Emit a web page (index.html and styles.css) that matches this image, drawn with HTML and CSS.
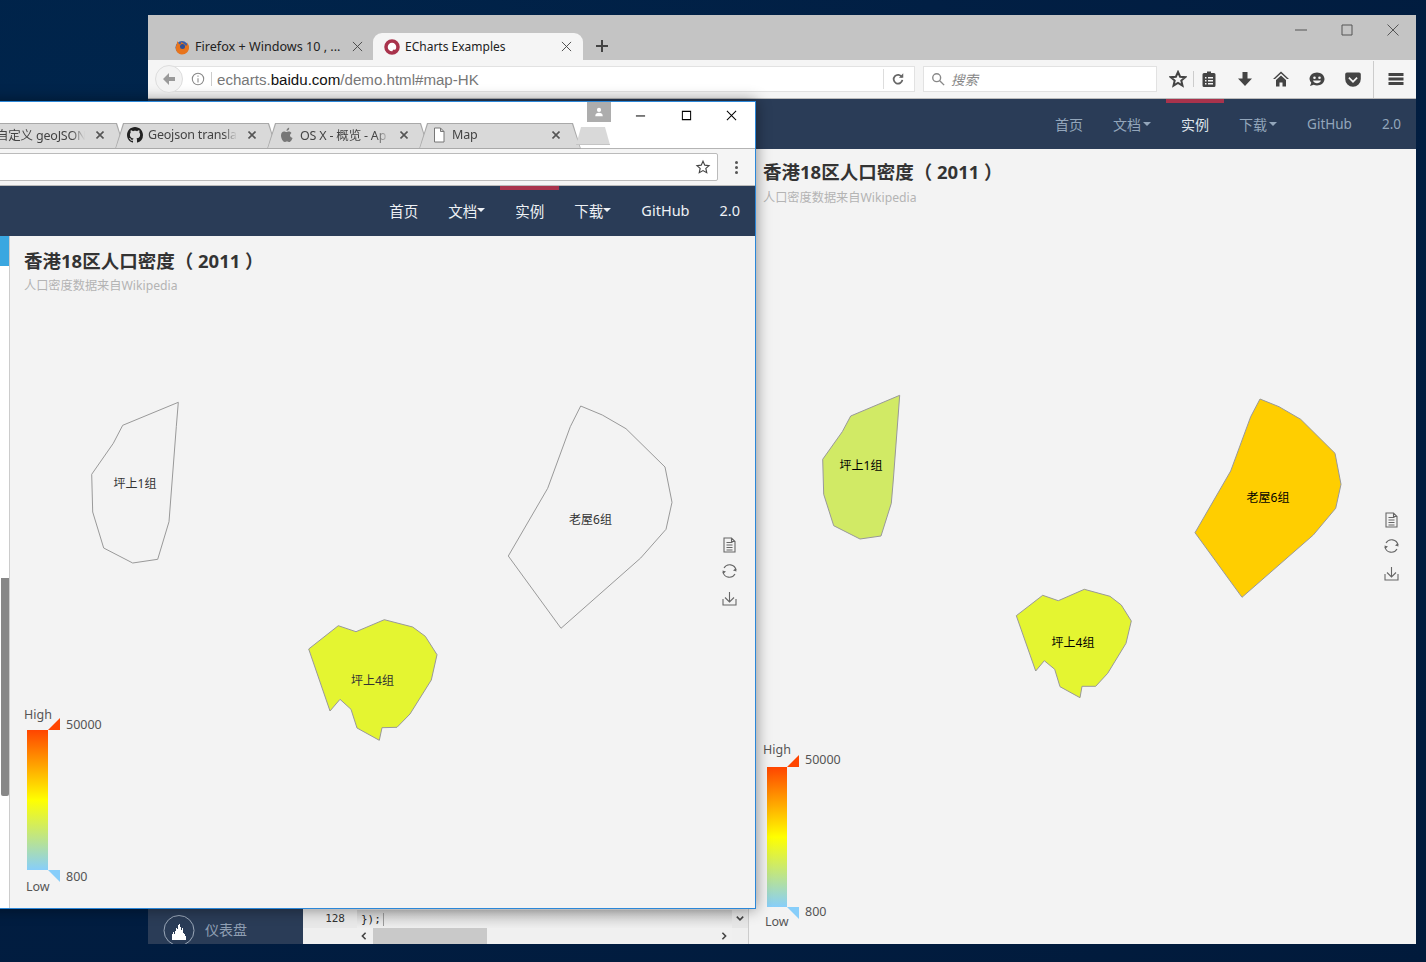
FILE: index.html
```html
<!DOCTYPE html>
<html lang="zh-CN">
<head>
    <meta charset="UTF-8">
    <title>ECharts Examples</title>
    <link rel="stylesheet" href="styles.css">
</head>
<body>
    <!-- back window: firefox -->
    <div class="ff-window">
        <div class="ff-tabbar">
            <div class="ff-tab">
                <svg class="ff-favicon" viewBox="0 0 16 16"><circle cx="8" cy="8.5" r="6.5" fill="#3c5fa8"/><path d="M3 2c0 2 0 3-1 5-1 4 1 8 6 8.500 4 0 7-3 7-7 0-2-1-4-2-5 .5 2 0 3-1 3.500-1-2-3-3-5-4 .5 1 0 2-1 2.500C5 5 4 3.500 3 2z" fill="#e8741c"/><circle cx="8.500" cy="7.500" r="2.500" fill="#2f4f95"/></svg>
                <span class="ff-tab-title">Firefox + Windows 10 , ...</span>
                <svg class="ff-close" viewBox="0 0 12 12"><path d="M1 1l10 10M11 1L1 11"/></svg>
            </div>
            <div class="ff-tab ff-tab-active">
                <svg class="ff-favicon" viewBox="0 0 16 16"><circle cx="8" cy="8" r="6" fill="#fff" stroke="#a9334c" stroke-width="3.500"/><circle cx="10" cy="12" r="1.500" fill="#a9334c"/></svg>
                <span class="ff-tab-title">ECharts Examples</span>
                <svg class="ff-close" viewBox="0 0 12 12"><path d="M1 1l10 10M11 1L1 11"/></svg>
            </div>
            <svg class="ff-plus" viewBox="0 0 14 14"><path d="M7 1v12M1 7h12"/></svg>
            <div class="ff-controls">
                <svg viewBox="0 0 12 12"><path d="M0 6h12"/></svg>
                <svg viewBox="0 0 12 12"><path d="M1 1h10v10H1z"/></svg>
                <svg viewBox="0 0 12 12"><path d="M0.500 0.500l11 11M11.500 0.500l-11 11"/></svg>
            </div>
        </div>

        <div class="ff-toolbar">
            <div class="ff-back">
                <svg viewBox="0 0 16 16"><path d="M8 2L2 8l6 6V10h6V6H8z"/></svg>
            </div>
            <div class="ff-urlbar">
                <svg class="ff-info" viewBox="0 0 16 16"><circle cx="8" cy="8" r="6.500"/><path d="M8 7v5M8 4v1.500"/></svg>
                <span class="ff-url"><span class="url-dim">echarts.</span>baidu.com<span class="url-dim">/demo.html#map-HK</span></span>
                <svg class="ff-reload" viewBox="0 0 16 16"><path d="M12.500 6A5 5 0 1 0 13 9"/><path class="solid" d="M9 6.500h5V1.500z"/></svg>
            </div>
            <div class="ff-search">
                <svg viewBox="0 0 16 16"><circle cx="6.500" cy="6.500" r="4.500"/><path d="M10 10l5 5"/></svg>
                <span>搜索</span>
            </div>
            <div class="ff-icons">
                <svg class="ic-star" viewBox="0 0 18 18"><path d="M9 2l2.100 4.700 5.100.5-3.900 3.400 1.200 5L9 13l-4.500 2.600 1.200-5-3.900-3.400 5.100-.5z"/></svg>
                <span class="ff-sep"></span>
                <svg viewBox="0 0 18 18"><path fill-rule="evenodd" d="M4 3h3V1.500h4V3h3a1.500 1.500 0 0 1 1.500 1.500v11A1.500 1.500 0 0 1 14 17H4a1.500 1.500 0 0 1-1.500-1.500v-11A1.500 1.500 0 0 1 4 3zm1 4v1.500h1.500V7zm3 0v1.500h5V7zm-3 3v1.500h1.500V10zm3 0v1.500h5V10zm-3 3v1.500h1.500V13zm3 0v1.500h5V13z"/></svg>
                <svg viewBox="0 0 18 18"><path d="M6.500 2h5v6.500H16L9 16 2 8.500h4.500z"/></svg>
                <svg viewBox="0 0 18 18"><path d="M9 1.500L1 9h2L9 3.500 15 9h2zM9 5.500L4 10v6.500h3.500v-4h3v4H14V10z"/></svg>
                <svg viewBox="0 0 18 18"><path fill-rule="evenodd" d="M9 2.500c4 0 7.500 2.800 7.500 6.500s-3.500 6.500-7.500 6.500c-1.200 0-2.300-.2-3.300-.7L2 16l1.300-3.200A6.300 6.300 0 0 1 1.500 9C1.500 5.300 5 2.500 9 2.500zM6.500 6.500a1.300 1.300 0 1 0 0 2.600 1.300 1.300 0 0 0 0-2.600zm5 0a1.300 1.300 0 1 0 0 2.600 1.300 1.300 0 0 0 0-2.600zM5 10.500c.6 1.800 2.200 2.800 4 2.800s3.400-1 4-2.800z"/></svg>
                <svg viewBox="0 0 18 18"><path fill-rule="evenodd" d="M3 2.500h12A1.800 1.800 0 0 1 16.800 4.300V9A7.800 7.800 0 0 1 1.200 9V4.300A1.800 1.800 0 0 1 3 2.500zM5.500 7L9 10.500 12.500 7l1.200 1.200L9 13 4.300 8.200z"/></svg>
                <span class="ff-sep ff-sep-wide"></span>
                <svg viewBox="0 0 18 18"><path d="M1.500 3h15v3h-15zM1.500 7.500h15v3h-15zM1.500 12h15v3h-15z"/></svg>
            </div>
        </div>

        <nav class="site-nav site-nav-dim">
            <a>首页</a>
            <a>文档<i class="caret"></i></a>
            <a class="active">实例</a>
            <a>下载<i class="caret"></i></a>
            <a>GitHub</a>
            <a>2.0</a>
        </nav>

        <div class="ff-main">
            <aside class="side-menu">
                <div class="side-item">
                    <svg class="side-icon" viewBox="0 0 32 32"><circle cx="16" cy="15.500" r="15"/><path class="solid" d="M9 25v-6h1v-2h1v2h1v-3h1v-3h1v1h1v-4h1v-1h1v3h1v3h1v-2h1v5h1v1h1v2h1v4z"/></svg>
                    <span class="side-label">仪表盘</span>
                </div>
            </aside>
            <div class="code-pane">
                <div class="code-row">
                    <span class="code-gutter">128</span>
                    <span class="code-line"><span class="code-text">});</span></span>
                    <span class="code-vbar"><svg viewBox="0 0 10 8"><path d="M1 1l4 4 4-4"/></svg></span>
                </div>
                <div class="code-hbar">
                    <svg viewBox="0 0 8 10"><path d="M6 1L2 5l4 4"/></svg>
                    <span class="code-thumb"></span>
                    <svg viewBox="0 0 8 10"><path d="M2 1l4 4-4 4"/></svg>
                </div>
            </div>
            <section class="chart-pane chart-pane-back">
                <h2>香港18区人口密度（ 2011 ）</h2>
                <p>人口密度数据来自Wikipedia</p>
                <svg class="chart" viewBox="749 149 667 795">
                    <defs>
                        <linearGradient id="ramp" x1="0" y1="0" x2="0" y2="1">
                            <stop offset="0" stop-color="#ff4500"/>
                            <stop offset="0.5" stop-color="#ffff00"/>
                            <stop offset="1" stop-color="#87cefa"/>
                        </linearGradient>
                        <g id="tools">
                            <path d="M-5.500-7h7.500l3.500 3.500V7h-11zM2-7v3.500h3.500M-3-2.500h6M-3 0h6M-3 2.500h6M-3 5h6"/>
                            <path d="M6.500 25a6.500 6.500 0 0 0-12-2M-6.500 27a6.500 6.500 0 0 0 12 2"/>
                            <path class="tool-solid" d="M7 26.500l-3.500-1 3-2.500zM-7 25.500l3.500 1-3 2.500z"/>
                            <path d="M0 47v10M-4.500 52.500L0 57l4.500-4.500M-6.500 54v6h13v-6"/>
                        </g>
                    </defs>
                    <polygon class="area" fill="#d1ea65" points="899.700,395.300 893.300,480 891.300,503.300 881,536 860,539 833.700,525.700 823.700,494.300 822.700,459.300 842.300,431.700 850.700,416"/>
                    <polygon class="area" fill="#e4f531" points="1016.300,615.700 1042.700,595.300 1058.300,600.700 1084.300,589.300 1110,596.300 1121.300,605 1131.300,621 1126,643.300 1107.700,673.300 1095.700,686.300 1082,686.300 1080,697.700 1060,686.700 1054.700,669.300 1044.300,660.700 1035.700,671"/>
                    <polygon class="area" fill="#ffce00" points="1260,399 1279,406.700 1300.700,419.300 1335,453.300 1341,484.300 1335.700,508.300 1313.300,535 1242,597.300 1195,532.700 1230.700,471 1250.700,416.700"/>
                    <text class="area-label" x="861" y="470">坪上1组</text>
                    <text class="area-label" x="1073" y="647">坪上4组</text>
                    <text class="area-label" x="1268" y="502">老屋6组</text>
                    <use class="tool" href="#tools" x="1391.500" y="520"/>
                    <rect x="767" y="767" width="20" height="140" fill="url(#ramp)"/>
                    <polygon points="787,767 799,767 799,755" fill="#ff4500"/>
                    <polygon points="787,907 799,907 799,919" fill="#87cefa"/>
                    <text class="legend-text" x="763" y="754">High</text>
                    <text class="legend-text" x="765" y="926">Low</text>
                    <text class="legend-text" x="805" y="764">50000</text>
                    <text class="legend-text" x="805" y="916">800</text>
                </svg>
            </section>
        </div>
    </div>

    <!-- front window: chrome -->
    <div class="cr-window">
        <div class="cr-titlebar">
            <div class="cr-tabs">
                <div class="cr-tab">
                    <span class="cr-tab-icon"></span>
                    <span class="cr-tab-title">自定义 geoJSON</span>
                    <svg class="cr-close" viewBox="0 0 8 8"><path d="M0.500 0.500l7 7M7.500 0.500l-7 7"/></svg>
                </div>
                <div class="cr-tab">
                    <svg class="cr-tab-icon" viewBox="0 0 16 16"><path d="M8 0C3.580 0 0 3.580 0 8c0 3.540 2.290 6.530 5.470 7.590.4.070.550-.170.550-.380 0-.190-.010-.820-.010-1.490-2.010.370-2.530-.490-2.690-.940-.090-.230-.480-.940-.820-1.130-.280-.150-.680-.520-.010-.530.630-.010 1.080.580 1.230.820.720 1.210 1.870.870 2.330.660.070-.520.280-.870.510-1.070-1.780-.2-3.640-.890-3.640-3.950 0-.870.310-1.590.820-2.150-.080-.2-.360-1.020.080-2.120 0 0 .670-.210 2.200.820.640-.180 1.320-.270 2-.270.680 0 1.360.090 2 .270 1.530-1.040 2.200-.820 2.200-.820.440 1.100.160 1.920.080 2.120.510.560.820 1.270.820 2.150 0 3.070-1.870 3.750-3.650 3.950.290.250.540.730.540 1.480 0 1.070-.010 1.930-.010 2.200 0 .210.150.460.550.380A8.013 8.013 0 0 0 16 8c0-4.420-3.580-8-8-8z"/></svg>
                    <span class="cr-tab-title">Geojson transla</span>
                    <svg class="cr-close" viewBox="0 0 8 8"><path d="M0.500 0.500l7 7M7.500 0.500l-7 7"/></svg>
                </div>
                <div class="cr-tab">
                    <svg class="cr-tab-icon cr-apple" viewBox="0 0 16 16"><path d="M11 8.500c0-1.700 1.400-2.500 1.500-2.600-.8-1.200-2.100-1.400-2.500-1.400-1.100-.1-2.100.6-2.600.6s-1.400-.6-2.300-.6C3.400 4.500 2 5.900 2 8.500c0 3 2.200 6.500 3.700 6.500.8 0 1.200-.6 2.300-.6s1.400.6 2.300.6c1.500 0 3-3 3.200-4.100-1.300-.6-2.500-1.200-2.500-2.400zM9.500 3c.5-.6.800-1.300.7-2.300-.7 0-1.500.5-2 1-.4.500-.8 1.300-.7 2.100.8.100 1.500-.3 2-.8z"/></svg>
                    <span class="cr-tab-title">OS X - 概览 - Ap</span>
                    <svg class="cr-close" viewBox="0 0 8 8"><path d="M0.500 0.500l7 7M7.500 0.500l-7 7"/></svg>
                </div>
                <div class="cr-tab">
                    <svg class="cr-tab-icon cr-doc" viewBox="0 0 16 16"><path d="M3.500 1h6l3.500 3.500v10.500H3.500zM9.500 1v3.500H13"/></svg>
                    <span class="cr-tab-title">Map</span>
                    <svg class="cr-close" viewBox="0 0 8 8"><path d="M0.500 0.500l7 7M7.500 0.500l-7 7"/></svg>
                </div>
                <span class="cr-newtab"></span>
            </div>
            <div class="cr-right">
                <span class="cr-user">
                    <svg viewBox="0 0 12 12"><circle cx="6" cy="3.500" r="2.500"/><path d="M1.500 11c0-3 2-4 4.500-4s4.500 1 4.500 4z"/></svg>
                </span>
                <span class="cr-btn"><svg viewBox="0 0 12 12"><path d="M1 6.500h10"/></svg></span>
                <span class="cr-btn"><svg viewBox="0 0 12 12"><path d="M1.500 1.500h9v9h-9z"/></svg></span>
                <span class="cr-btn"><svg viewBox="0 0 12 12"><path d="M1 1l10 10M11 1L1 11"/></svg></span>
            </div>
        </div>
        <div class="cr-toolbar">
            <div class="cr-urlbar">
                <svg viewBox="0 0 18 18"><path d="M9 2.500l2 4.400 4.800.5-3.600 3.200 1 4.800L9 13l-4.200 2.400 1-4.800-3.600-3.200 4.800-.5z"/></svg>
            </div>
            <span class="cr-menu"><i></i><i></i><i></i></span>
        </div>
        <nav class="site-nav site-nav-front">
            <a>首页</a>
            <a>文档<i class="caret"></i></a>
            <a class="active">实例</a>
            <a>下载<i class="caret"></i></a>
            <a>GitHub</a>
            <a>2.0</a>
        </nav>
        <div class="cr-main">
            <aside class="cr-side">
                <span class="cr-side-active"></span>
                <span class="cr-scroll"></span>
            </aside>
            <section class="chart-pane">
                <h2>香港18区人口密度（ 2011 ）</h2>
                <p>人口密度数据来自Wikipedia</p>
                <svg class="chart" viewBox="10 236 745 672">
                    <polygon class="area" fill="none" points="178.300,402.300 176.300,426.700 169,521.700 157.700,559.300 132.700,563 103.700,548 92.700,512 91.700,474.300 113.300,443.300 122.700,425.300"/>
                    <polygon class="area" fill="#e4f531" points="308.700,649 338.300,625.700 356,631.700 384.300,619.700 412.700,627 425.300,636.300 437,654.700 431.300,680 410,714 397,727.300 382,727.700 379.300,740.300 357,728 351,709.300 340,699.300 330,711"/>
                    <polygon class="area" fill="none" points="580.700,406 602.300,415 626,428.700 665,467 672,502.300 666,529.300 640.700,558 561,628.300 508.300,556 547.700,488.300 570.300,426.700"/>
                    <text class="area-label area-label-soft" x="135" y="488">坪上1组</text>
                    <text class="area-label area-label-soft" x="372.500" y="685">坪上4组</text>
                    <text class="area-label area-label-soft" x="590.500" y="524">老屋6组</text>
                    <use class="tool" href="#tools" x="729.500" y="545"/>
                    <rect x="27" y="730" width="21" height="140" fill="url(#ramp)"/>
                    <polygon points="48,730 60,730 60,718" fill="#ff4500"/>
                    <polygon points="48,870 60,870 60,882" fill="#87cefa"/>
                    <text class="legend-text" x="24" y="719">High</text>
                    <text class="legend-text" x="26" y="891">Low</text>
                    <text class="legend-text" x="66" y="729">50000</text>
                    <text class="legend-text" x="66" y="881">800</text>
                </svg>
            </section>
        </div>
    </div>
</body>
</html>
```

FILE: styles.css
```css
html, body {
    margin: 0;
    height: 100%;
}

body {
    position: relative;
    overflow: hidden;
    font-family: "Noto Sans", "Noto Sans CJK SC", sans-serif;
    background: radial-gradient(ellipse at 8% 12%, #00254c 0%, #011f44 45%, #011a3b 100%);
}

svg {
    display: block;
}

/* back window */
.ff-window {
    position: absolute;
    left: 148px;
    top: 15px;
    width: 1268px;
    height: 929px;
    display: flex;
    flex-direction: column;
}

.ff-tabbar {
    height: 45px;
    background: #c4c4c4;
    display: flex;
    align-items: flex-end;
    padding-left: 12px;
    flex: none;
}

.ff-tab {
    width: 213px;
    height: 27px;
    display: flex;
    align-items: center;
    padding: 0 6px 0 14px;
    box-sizing: border-box;
    font-size: 12.600px;
    color: #222;
}

.ff-tab-active {
    width: 210px;
    background: #f5f5f5;
    border-radius: 9px 9px 0 0;
    padding-left: 11px;
    padding-right: 7px;
    font-size: 12px;
}

.ff-favicon {
    width: 16px;
    height: 16px;
    flex: none;
    margin-right: 5px;
}

.ff-tab-title {
    flex: 1;
    white-space: nowrap;
}

.ff-close {
    width: 11px;
    height: 11px;
    flex: none;
    margin-right: 4px;
}

.ff-close path {
    fill: none;
    stroke: #444;
    stroke-width: 1;
}

.ff-plus {
    width: 14px;
    height: 14px;
    margin: 0 0 7px 12px;
}

.ff-plus path {
    fill: none;
    stroke: #444;
    stroke-width: 2;
}

.ff-controls {
    margin-left: auto;
    align-self: flex-start;
    display: flex;
    gap: 34px;
    padding: 9px 17px 0 0;
}

.ff-controls svg {
    width: 12px;
    height: 12px;
}

.ff-controls path {
    fill: none;
    stroke: #555;
    stroke-width: 1;
}

.ff-toolbar {
    height: 39px;
    flex: none;
    background: #f5f5f5;
    border-bottom: 1px solid #bbb;
    box-sizing: border-box;
    display: flex;
    align-items: center;
    position: relative;
    padding-left: 7px;
}

.ff-back {
    width: 28px;
    height: 28px;
    border: 1px solid #ddd;
    border-radius: 50%;
    background: #f3f3f3;
    box-sizing: border-box;
    display: flex;
    align-items: center;
    justify-content: center;
    flex: none;
    z-index: 1;
}

.ff-back svg {
    width: 16px;
    height: 16px;
    fill: #9a9a9a;
}

.ff-urlbar {
    width: 746px;
    height: 26px;
    margin-left: -14px;
    padding-left: 21px;
    background: #fff;
    border: 1px solid #e2e2e2;
    box-sizing: border-box;
    display: flex;
    align-items: center;
    flex: none;
}

.ff-info {
    width: 14px;
    height: 14px;
    fill: none;
    stroke: #888;
    stroke-width: 1.200;
    padding-right: 6px;
    border-right: 1px solid #ccc;
    flex: none;
}

.ff-url {
    font-family: "Liberation Sans", sans-serif;
    font-size: 15.100px;
    color: #111;
    margin-left: 5px;
    flex: 1;
    white-space: nowrap;
}

.url-dim {
    color: #777;
}

.ff-reload {
    width: 14px;
    height: 14px;
    padding: 3px 9px 3px 7px;
    border-left: 1px solid #ddd;
    fill: none;
    stroke: #666;
    stroke-width: 2;
    flex: none;
}

.ff-reload .solid {
    fill: #666;
    stroke: none;
}

.ff-search {
    width: 234px;
    height: 26px;
    margin-left: 8px;
    background: #fff;
    border: 1px solid #e2e2e2;
    box-sizing: border-box;
    display: flex;
    align-items: center;
    gap: 6px;
    padding-left: 7px;
    font-size: 13.500px;
    font-style: italic;
    color: #888;
    flex: none;
}

.ff-search svg {
    width: 14px;
    height: 14px;
    fill: none;
    stroke: #888;
    stroke-width: 1.600;
}

.ff-icons {
    display: flex;
    align-items: center;
    margin-left: 12px;
    gap: 18px;
}

.ff-icons svg {
    width: 18px;
    height: 18px;
    fill: #444;
    flex: none;
}

.ff-icons .ic-star {
    fill: none;
    stroke: #444;
    stroke-width: 2;
}

.ff-sep {
    width: 1px;
    height: 16px;
    background: #ccc;
    margin: 0 -12px 0 -12px;
}

.ff-sep-wide {
    height: 37px;
    margin: 0 -5.500px 0 -7px;
}

/* site header, same in both windows */
.site-nav {
    height: 50px;
    flex: none;
    background: #2a3c57;
    display: flex;
    justify-content: flex-end;
    align-items: center;
    font-size: 14.500px;
    color: #eef1f5;
}

.site-nav a {
    height: 100%;
    padding: 0 15px;
    display: flex;
    align-items: center;
    box-sizing: border-box;
    white-space: nowrap;
}

.site-nav .active {
    border-top: 4px solid #a9334c;
    padding-bottom: 4px;
}

.site-nav-front a {
    padding-bottom: 2px;
}

.site-nav-front .active {
    padding-bottom: 6px;
}

.site-nav-front .caret {
    margin-left: 0;
}

.site-nav-dim {
    font-size: 14px;
    color: #93a6bb;
}

.site-nav-dim a:nth-child(n+5) {
    font-size: 13.500px;
}

.site-nav-dim .active {
    color: #dfe5ec;
}

.caret {
    width: 0;
    height: 0;
    margin-left: 2px;
    border-left: 4px solid transparent;
    border-right: 4px solid transparent;
    border-top: 4px solid currentColor;
}

.ff-main {
    flex: 1;
    display: flex;
    min-height: 0;
}

.side-menu {
    width: 155px;
    flex: none;
    background: #2a3c57;
    display: flex;
    flex-direction: column;
    justify-content: flex-end;
    overflow: hidden;
}

.side-item {
    display: flex;
    align-items: center;
    gap: 10px;
    padding-left: 15px;
    height: 32px;
    margin-bottom: -3px;
    font-size: 14px;
    color: #8f9fb3;
}

.side-label {
    padding-bottom: 4px;
}

.side-icon {
    width: 32px;
    height: 32px;
    fill: none;
    stroke: #9aa7b8;
    stroke-width: 1;
    flex: none;
}

.side-icon .solid {
    fill: #fff;
    stroke: none;
}

.code-pane {
    width: 446px;
    flex: none;
    background: #efefef;
    border-right: 1px solid #ccc;
    box-sizing: border-box;
    display: flex;
    flex-direction: column;
    justify-content: flex-end;
    font-family: "DejaVu Sans Mono", monospace;
    font-size: 11px;
}

.code-row {
    height: 18px;
    display: flex;
    align-items: center;
    background: linear-gradient(#cfcfcf, #eeeeee);
}

.code-gutter {
    width: 54px;
    height: 100%;
    padding-right: 12px;
    box-sizing: border-box;
    background: #e8e8e8;
    color: #333;
    text-align: right;
    line-height: 18px;
    flex: none;
}

.code-line {
    flex: 1;
    padding-left: 4px;
    color: #222;
}

.code-text {
    padding-right: 2px;
    border-right: 1px solid #999;
}

.code-vbar {
    width: 16px;
    height: 100%;
    background: #e6e6e6;
    display: flex;
    align-items: center;
    justify-content: center;
    flex: none;
}

.code-vbar svg,
.code-hbar svg {
    width: 8px;
    height: 8px;
    fill: none;
    stroke: #444;
    stroke-width: 2;
    flex: none;
}

.code-hbar {
    height: 16px;
    display: flex;
    align-items: center;
    margin: 0 16px 0 57px;
    background: #f0f0f0;
    padding-right: 4px;
}

.code-thumb {
    width: 114px;
    height: 100%;
    background: #c9c9c9;
    margin: 0 auto 0 5px;
}

.chart-pane {
    flex: 1;
    position: relative;
    background: #f3f3f3;
    padding: 13px 14px 0;
    min-width: 0;
    overflow: hidden;
}

.chart-pane-back {
    padding: 11px 14px 0;
}

.chart-pane h2 {
    margin: 0;
    font-size: 18.500px;
    line-height: 24px;
    font-weight: 700;
    color: #333;
    white-space: nowrap;
}

.chart-pane p {
    margin: 4px 0 0;
    font-size: 12.200px;
    line-height: 18px;
    color: #b4b4b4;
}

.chart-pane-back p {
    margin-top: 5px;
}

.chart {
    position: absolute;
    left: 0;
    top: 0;
    width: 100%;
    height: 100%;
}

.area {
    stroke: #999;
    stroke-width: 1;
}

.area-label {
    font-size: 12px;
    text-anchor: middle;
    fill: #000;
}

.area-label-soft {
    fill: #333;
}

.tool {
    fill: none;
    stroke: #666;
    stroke-width: 1.100;
}

.tool-solid {
    fill: #666;
    stroke: none;
}

.legend-text {
    font-size: 12.500px;
    fill: #555;
}

/* front window */
.cr-window {
    position: absolute;
    left: -100px;
    top: 101px;
    width: 856px;
    height: 808px;
    box-sizing: border-box;
    border: 1px solid #2b87d8;
    background: #fff;
    box-shadow: 0 0 14px rgba(0, 0, 0, 0.45);
    display: flex;
    flex-direction: column;
    overflow: hidden;
}

.cr-titlebar {
    height: 47px;
    flex: none;
    display: flex;
    background: #fff;
    border-bottom: 1px solid #b4b4b4;
    box-sizing: border-box;
}

.cr-tabs {
    flex: 1;
    min-width: 0;
    display: flex;
    align-items: flex-end;
    padding-left: 62px;
    margin-bottom: -1px;
}

.cr-tab {
    width: 162px;
    height: 26px;
    margin-right: -10px;
    flex: none;
    position: relative;
    isolation: isolate;
    display: flex;
    align-items: center;
    padding: 0 21px 3px 12px;
    box-sizing: border-box;
    font-size: 12.500px;
    color: #444;
    clip-path: polygon(0 100%, 8px 0, calc(100% - 8px) 0, 100% 100%);
    background: #a9a9a9;
}

.cr-tab::before {
    content: "";
    position: absolute;
    inset: 1px 1px 1px 1px;
    z-index: -1;
    background: #d9d9d9;
    clip-path: polygon(0 100%, 8px 0, calc(100% - 8px) 0, 100% 100%);
}

.cr-tab-icon {
    width: 16px;
    height: 16px;
    flex: none;
    margin-right: 5px;
    fill: #222;
}

.cr-apple {
    fill: #777;
}

.cr-doc {
    fill: #fff;
    stroke: #777;
    stroke-width: 1;
}

.cr-tab-title {
    flex: 1;
    min-width: 0;
    overflow: hidden;
    white-space: nowrap;
    letter-spacing: -0.2px;
    -webkit-mask-image: linear-gradient(to right, #000 85%, transparent 100%);
    mask-image: linear-gradient(to right, #000 85%, transparent 100%);
}

.cr-close {
    width: 8px;
    height: 8px;
    flex: none;
    margin-left: 11px;
    fill: none;
    stroke: #555;
    stroke-width: 1.600;
}

.cr-newtab {
    width: 34px;
    height: 17px;
    margin: 0 0 4px 5px;
    background: #d9d9d9;
    border-bottom: 1px solid #c4c4c4;
    flex: none;
    clip-path: polygon(0 100%, 5px 0, calc(100% - 5px) 0, 100% 100%);
}

.cr-right {
    display: flex;
    flex: none;
    width: 168px;
    align-items: flex-start;
}

.cr-user {
    width: 24px;
    height: 20px;
    margin-right: 7px;
    background: #adadad;
    display: flex;
    align-items: center;
    justify-content: center;
    flex: none;
}

.cr-user svg {
    width: 10px;
    height: 10px;
    fill: #fff;
}

.cr-btn {
    width: 45.500px;
    height: 27px;
    display: flex;
    align-items: center;
    justify-content: center;
    flex: none;
}

.cr-btn svg {
    width: 11px;
    height: 11px;
    fill: none;
    stroke: #000;
    stroke-width: 1.100;
}

.cr-toolbar {
    height: 37px;
    flex: none;
    background: #f5f5f5;
    border-bottom: 1px solid #bbb;
    box-sizing: border-box;
    display: flex;
    align-items: center;
}

.cr-urlbar {
    flex: 1;
    height: 28px;
    background: #fff;
    border: 1px solid #bbb;
    border-radius: 2px;
    box-sizing: border-box;
    display: flex;
    align-items: center;
    justify-content: flex-end;
    padding-right: 6px;
}

.cr-urlbar svg {
    width: 16px;
    height: 16px;
    fill: none;
    stroke: #444;
    stroke-width: 1.300;
}

.cr-menu {
    width: 37px;
    display: flex;
    flex-direction: column;
    align-items: center;
    gap: 2px;
    flex: none;
}

.cr-menu i {
    width: 3px;
    height: 3px;
    border-radius: 50%;
    background: #555;
}

.cr-main {
    flex: 1;
    display: flex;
    min-height: 0;
}

.cr-side {
    width: 108px;
    flex: none;
    position: relative;
    background: #fff;
    border-right: 1px solid #ccc;
}

.cr-side-active {
    position: absolute;
    left: 0;
    right: 0;
    top: 0;
    height: 30px;
    background: #3aa7e0;
}

.cr-scroll {
    position: absolute;
    right: 0;
    top: 342px;
    width: 8px;
    height: 218px;
    background: #888;
    border-radius: 0 0 2px 2px;
}
```
